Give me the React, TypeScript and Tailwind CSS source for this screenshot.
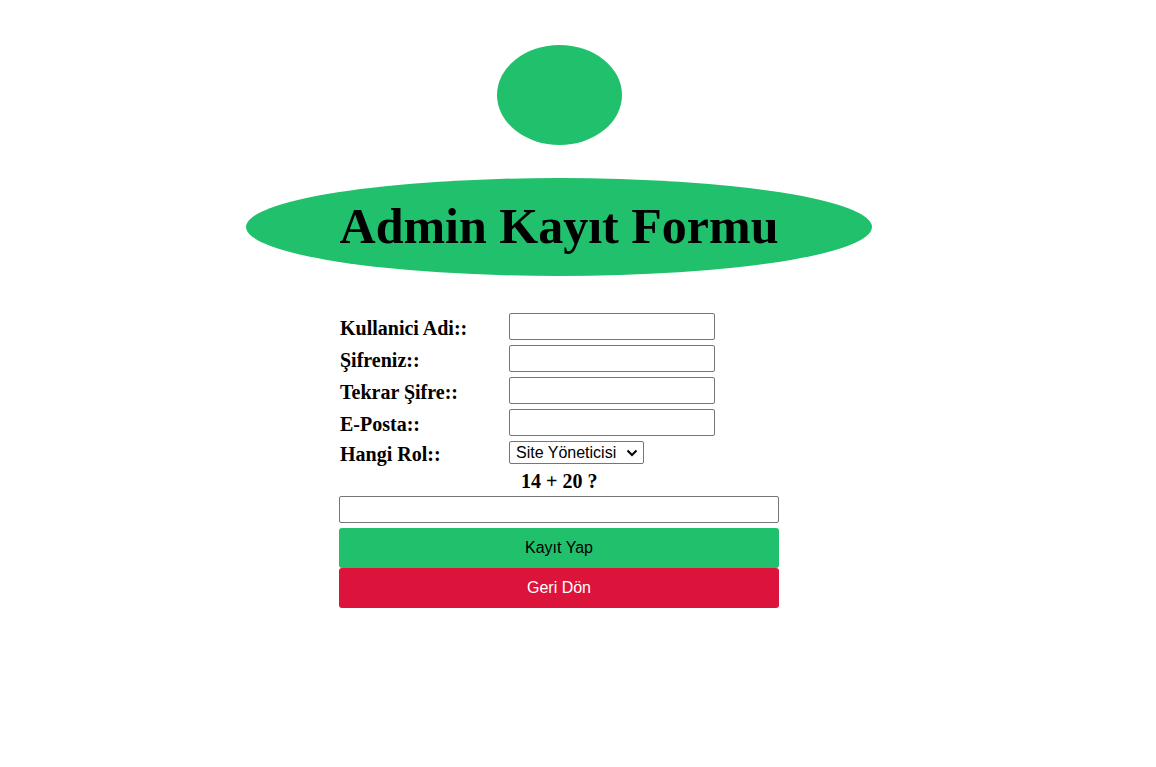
import React from 'react';

const serif = { fontFamily: '"Liberation Serif", "Times New Roman", serif' };

const App: React.FC = () => {
  const fields = ['Kullanici Adi::', 'Şifreniz::', 'Tekrar Şifre::', 'E-Posta::'];

  return (
    <div className="w-[1118px] min-h-[767px] bg-white flex flex-col items-center pt-[45px]" style={serif}>
      <div className="w-[125px] h-[100px] rounded-[50%] bg-[#21c06c]" />

      <div className="mt-[33px] w-[626px] h-[98px] rounded-[50%] bg-[#21c06c] flex items-center justify-center">
        <h1 className="text-[50px] font-bold text-black leading-none pb-[2px]">Admin Kayıt Formu</h1>
      </div>

      <form className="mt-[37px] w-[440px] flex flex-col">
        <div className="grid grid-cols-[169px_206px] gap-y-[5px] pl-[1px]">
          {fields.map((f) => (
            <React.Fragment key={f}>
              <label className="text-[20px] font-bold text-black h-[27px] flex items-center pt-[3px]">{f}</label>
              <input
                type={f.startsWith('Şifre') || f.startsWith('Tekrar') ? 'password' : 'text'}
                className="w-[206px] h-[27px] border border-[#767676] rounded-[2px] bg-white"
              />
            </React.Fragment>
          ))}
          <label className="text-[20px] font-bold text-black h-[23px] flex items-center pt-[3px]">Hangi Rol::</label>
          <div className="h-[23px] flex">
            <div className="h-[23px] w-[135px] border border-[#767676] rounded-[2px] flex items-center pl-[6px] pr-[5px] justify-between" style={{ fontFamily: '"Liberation Sans", Arial, sans-serif' }}>
              <span className="text-[16px] text-black leading-none">Site Yöneticisi</span>
              <svg width="12" height="10" viewBox="0 0 12 10" className="text-black">
                <path d="M1.5 2.5 L6 7 L10.5 2.5" fill="none" stroke="currentColor" strokeWidth="2" />
              </svg>
            </div>
          </div>
        </div>

        <div className="h-[32px] flex items-center pl-[182px] pt-[1px]">
          <span className="text-[20px] font-bold text-black">14 + 20 ?</span>
        </div>

        <input type="text" className="w-[440px] h-[27px] border border-[#767676] rounded-[2px] bg-white" />

        <div className="mt-[5px] flex flex-col" style={{ fontFamily: '"Liberation Sans", Arial, sans-serif' }}>
          <button type="button" className="w-[440px] h-[40px] bg-[#21c06c] text-black text-[16px] rounded-[3px]">
            Kayıt Yap
          </button>
          <button type="button" className="w-[440px] h-[40px] bg-[#dc143c] text-white text-[16px] rounded-[3px]">
            Geri Dön
          </button>
        </div>
      </form>
    </div>
  );
};

export default App;
